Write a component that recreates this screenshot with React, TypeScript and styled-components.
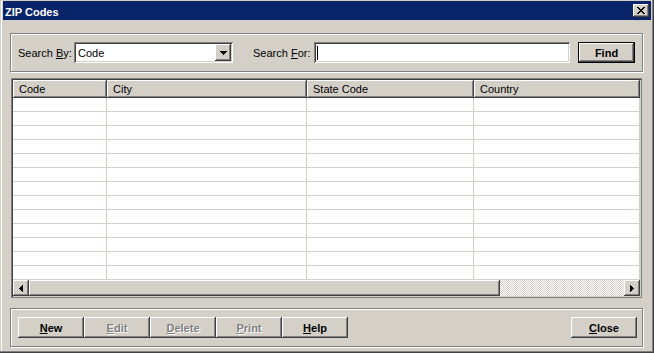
import React from 'react';
import styled, { createGlobalStyle } from 'styled-components';

const face = '#d4d0c8';
const shadow = '#808080';
const dark = '#404040';

const raised = `box-shadow: inset -1px -1px 0 ${dark}, inset 1px 1px 0 #fff, inset -2px -2px 0 ${shadow}, inset 2px 2px 0 ${face};`;
const sunken = `box-shadow: inset 1px 1px 0 ${shadow}, inset -1px -1px 0 #fff, inset 2px 2px 0 ${dark}, inset -2px -2px 0 ${face};`;

const GlobalStyle = createGlobalStyle`
    html, body {
        margin: 0;
        padding: 0;
        background: ${face};
    }
    body {
        font-family: "Liberation Sans", Arial, sans-serif;
        font-size: 11px;
        color: #000;
    }
    * {
        box-sizing: border-box;
    }
`;

const Window = styled.div`
    width: 654px;
    height: 353px;
    display: flex;
    flex-direction: column;
    padding: 1px 3px 3px;
    background: ${face};
    box-shadow: inset -1px -1px 0 ${dark}, inset -2px -2px 0 ${shadow}, inset 1px 1px 0 ${face}, inset 2px 2px 0 #fff;
`;

const TitleBar = styled.div`
    height: 19px;
    flex: none;
    display: flex;
    align-items: flex-start;
    justify-content: space-between;
    padding: 0 2px;
    background: #0a246a;
`;

const Title = styled.span`
    color: #fff;
    font-weight: bold;
    font-size: 11px;
    line-height: 13px;
    margin-top: 5px;
`;

const CaptionButton = styled.div`
    width: 16px;
    height: 13px;
    margin-top: 3px;
    display: flex;
    align-items: center;
    justify-content: center;
    background: ${face};
    ${raised}
`;

const Body = styled.div`
    flex: 1;
    display: flex;
    flex-direction: column;
    padding: 13px 8px 8px 7px;
`;

const GroupBox = styled.div`
    height: 39px;
    flex: none;
    display: flex;
    align-items: center;
    border: 1px solid ${shadow};
    box-shadow: 1px 1px 0 #fff, inset 1px 1px 0 #fff;
`;

const SearchBox = styled(GroupBox)`
    padding-left: 7px;
`;

const ActionBox = styled(GroupBox)`
    margin-top: 10px;
    padding: 0 5px 0 7px;
    justify-content: space-between;
`;

const Label = styled.span<{ $width: number }>`
    width: ${(p) => p.$width}px;
    flex: none;
    white-space: nowrap;
`;

const Combo = styled.div`
    width: 159px;
    height: 21px;
    display: flex;
    align-items: center;
    padding: 2px 2px 2px 4px;
    background: #fff;
    ${sunken}
`;

const ComboText = styled.span`
    flex: 1;
`;

const DropButton = styled.div`
    width: 16px;
    height: 17px;
    display: flex;
    align-items: center;
    justify-content: center;
    background: ${face};
    ${raised}
`;

const Input = styled.div`
    width: 256px;
    height: 21px;
    margin-left: 0;
    display: flex;
    align-items: center;
    padding-left: 3px;
    background: #fff;
    ${sunken}
`;

const Caret = styled.span`
    width: 1px;
    height: 14px;
    background: #000;
`;

const Gap = styled.div<{ $w: number }>`
    width: ${(p) => p.$w}px;
    flex: none;
`;

const DefaultButton = styled.div`
    width: 57px;
    height: 21px;
    border: 1px solid #000;
    display: flex;
    align-items: center;
    justify-content: center;
    font-weight: bold;
    background: ${face};
    ${raised}
`;

const Grid = styled.div`
    flex: 1;
    margin: 6px 1px 0;
    display: flex;
    flex-direction: column;
    border: 1px solid ${shadow};
    box-shadow: inset 1px 1px 0 ${dark}, inset -1px -1px 0 ${face};
    padding: 1px;
    overflow: hidden;
`;

const Columns = styled.div`
    display: grid;
    grid-template-columns: 94px 200px 167px 1fr;
`;

const HeaderCell = styled.div`
    height: 18px;
    display: flex;
    align-items: center;
    padding-left: 6px;
    background: ${face};
    ${raised}
`;

const Rows = styled.div`
    flex: 1;
    overflow: hidden;
    background: #fff;
`;

const Cell = styled.div`
    height: 14px;
    border-right: 1px solid ${face};
    border-bottom: 1px solid ${face};
`;

const ScrollBar = styled.div`
    height: 16px;
    flex: none;
    display: flex;
`;

const ArrowButton = styled.div`
    width: 16px;
    height: 16px;
    display: flex;
    align-items: center;
    justify-content: center;
    background: ${face};
    ${raised}
`;

const Thumb = styled.div`
    width: 471px;
    background: ${face};
    ${raised}
`;

const Track = styled.div`
    flex: 1;
    background-image: conic-gradient(#fff 25%, ${face} 0 50%, #fff 0 75%, ${face} 0);
    background-size: 2px 2px;
`;

const ButtonStrip = styled.div`
    display: flex;
`;

const Button = styled.div<{ $disabled?: boolean }>`
    width: 66px;
    height: 21px;
    display: flex;
    align-items: center;
    justify-content: center;
    font-weight: bold;
    background: ${face};
    color: ${(p) => (p.$disabled ? shadow : '#000')};
    text-shadow: ${(p) => (p.$disabled ? '1px 1px 0 #fff' : 'none')};
    ${raised}
`;

const CloseGlyph = () => (
    <svg width="8" height="7" viewBox="0 0 8 7" shapeRendering="crispEdges">
        <path
            d="M0 0h2v1h-2z M6 0h2v1h-2z M1 1h2v1h-2z M5 1h2v1h-2z M2 2h4v1h-4z M3 3h2v1h-2z M2 4h4v1h-4z M1 5h2v1h-2z M5 5h2v1h-2z M0 6h2v1h-2z M6 6h2v1h-2z"
            fill="#000"
        />
    </svg>
);

const DownArrow = () => (
    <svg width="7" height="4" viewBox="0 0 7 4" shapeRendering="crispEdges">
        <path d="M0 0h7v1h-7z M1 1h5v1h-5z M2 2h3v1h-3z M3 3h1v1h-1z" fill="#000" />
    </svg>
);

const SideArrow = ({ dir }: { dir: 'left' | 'right' }) => (
    <svg width="4" height="7" viewBox="0 0 4 7" shapeRendering="crispEdges">
        <path
            d={dir === 'left'
                ? 'M3 0h1v7h-1z M2 1h1v5h-1z M1 2h1v3h-1z M0 3h1v1h-1z'
                : 'M0 0h1v7h-1z M1 1h1v5h-1z M2 2h1v3h-1z M3 3h1v1h-1z'}
            fill="#000"
        />
    </svg>
);

const columns = ['Code', 'City', 'State Code', 'Country'];
const rows = Array.from({ length: 13 }, (_, i) => i);

const actions = [
    { key: 'new', first: 'N', rest: 'ew', disabled: false },
    { key: 'edit', first: 'E', rest: 'dit', disabled: true },
    { key: 'delete', first: 'D', rest: 'elete', disabled: true },
    { key: 'print', first: 'P', rest: 'rint', disabled: true },
    { key: 'help', first: 'H', rest: 'elp', disabled: false },
];

export default function App() {
    return (
        <>
            <GlobalStyle />
            <Window>
                <TitleBar>
                    <Title>ZIP Codes</Title>
                    <CaptionButton>
                        <CloseGlyph />
                    </CaptionButton>
                </TitleBar>
                <Body>
                    <SearchBox>
                        <Label $width={56}>Search <u>B</u>y:</Label>
                        <Combo>
                            <ComboText>Code</ComboText>
                            <DropButton>
                                <DownArrow />
                            </DropButton>
                        </Combo>
                        <Gap $w={20} />
                        <Label $width={61}>Search <u>F</u>or:</Label>
                        <Input>
                            <Caret />
                        </Input>
                        <Gap $w={8} />
                        <DefaultButton>Find</DefaultButton>
                    </SearchBox>

                    <Grid>
                        <Columns>
                            {columns.map((c) => (
                                <HeaderCell key={c}>{c}</HeaderCell>
                            ))}
                        </Columns>
                        <Rows>
                            {rows.map((r) => (
                                <Columns key={r}>
                                    {columns.map((c) => (
                                        <Cell key={c} />
                                    ))}
                                </Columns>
                            ))}
                        </Rows>
                        <ScrollBar>
                            <ArrowButton>
                                <SideArrow dir="left" />
                            </ArrowButton>
                            <Thumb />
                            <Track />
                            <ArrowButton>
                                <SideArrow dir="right" />
                            </ArrowButton>
                        </ScrollBar>
                    </Grid>

                    <ActionBox>
                        <ButtonStrip>
                            {actions.map((a) => (
                                <Button key={a.key} $disabled={a.disabled}>
                                    <u>{a.first}</u>
                                    {a.rest}
                                </Button>
                            ))}
                        </ButtonStrip>
                        <Button>
                            <u>C</u>lose
                        </Button>
                    </ActionBox>
                </Body>
            </Window>
        </>
    );
}
